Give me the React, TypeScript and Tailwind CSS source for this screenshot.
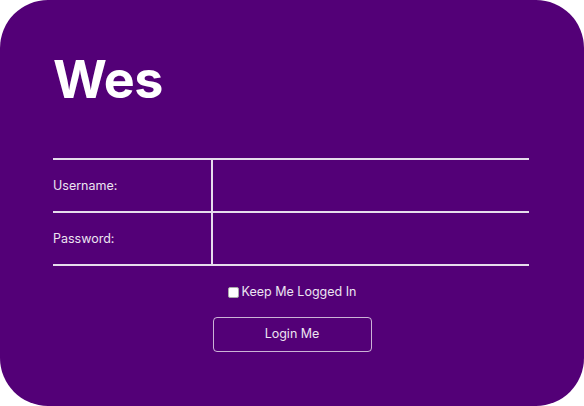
export default function App() {
  return (
    <div className="w-[584px] h-[406px] bg-white">
      <div className="w-full h-full rounded-[48px] bg-[#530077] px-[53px] pt-[46px] font-['Inter',sans-serif] text-white">
        <h1 className="text-[52px] font-bold leading-[68px] tracking-[-0.5px]">Wes</h1>
        <table className="mt-[44px] w-[476px] border-collapse text-[12.5px] text-[#ece4f1]">
          <tbody>
            <tr className="h-[53px] border-t-2 border-b-2 border-[#e6dcec]">
              <td className="w-[159px] border-r-2 border-[#e6dcec] pt-[2px]">Username:</td>
              <td></td>
            </tr>
            <tr className="h-[53px] border-b-2 border-[#e6dcec]">
              <td className="w-[159px] border-r-2 border-[#e6dcec] pt-[1px]">Password:</td>
              <td></td>
            </tr>
          </tbody>
        </table>
        <label className="mt-[17px] flex items-center justify-center gap-[3px] text-[12.5px] text-[#ece4f1]">
          <input type="checkbox" className="w-[11px] h-[11px] m-0 appearance-none bg-white rounded-[2px] border border-[#aaa]" />
          Keep Me Logged In
        </label>
        <div className="mt-[15px] flex justify-center">
          <button className="w-[159px] h-[35px] rounded-[4px] border border-white/70 text-[12.5px] text-[#ece4f1]">
            Login Me
          </button>
        </div>
      </div>
    </div>
  )
}
